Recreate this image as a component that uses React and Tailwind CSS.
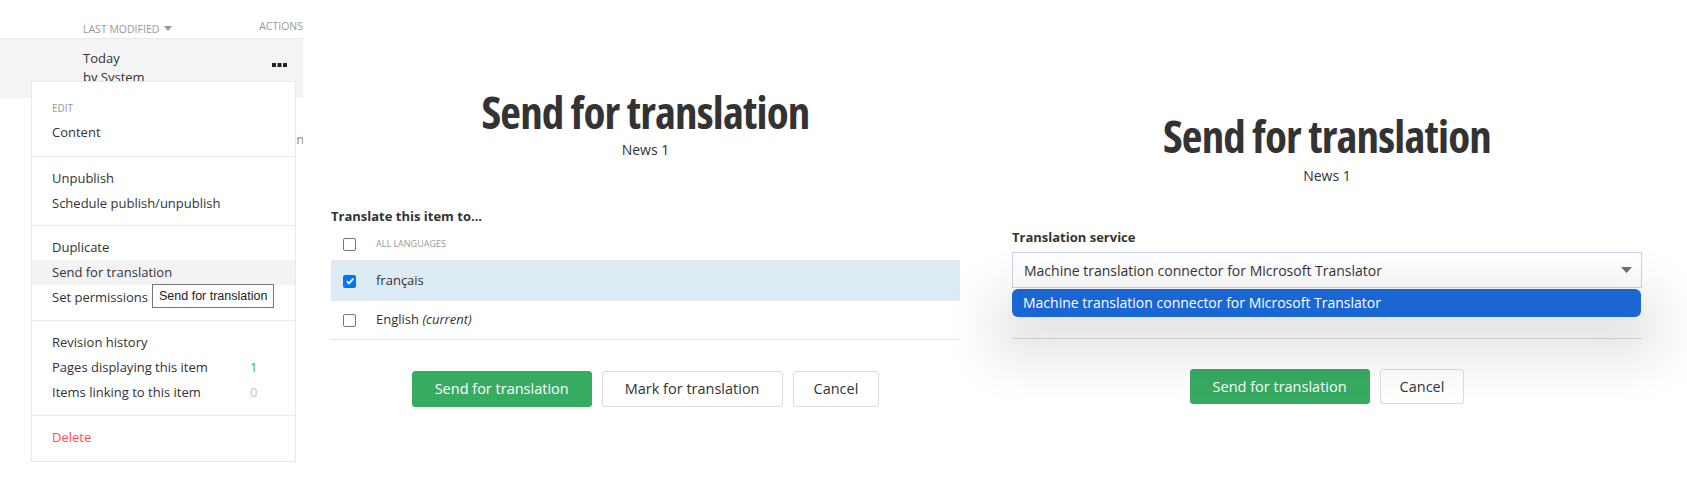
import React from 'react';

function Check({ checked }) {
  if (checked) {
    return (
      <span className="flex h-[13px] w-[13px] items-center justify-center rounded-[2px] bg-[#0075ff]">
        <svg width="10" height="10" viewBox="0 0 10 10">
          <path d="M1.8 5.2 L4 7.4 L8.4 2.6" fill="none" stroke="white" strokeWidth="1.8" />
        </svg>
      </span>
    );
  }
  return <span className="block h-[13px] w-[13px] rounded-[2px] border border-[#767676] bg-white"></span>;
}

function MenuItem({ children, className = '' }) {
  return <div className={`h-[25px] px-[20px] leading-[25px] ${className}`}>{children}</div>;
}

function ActionsMenu() {
  return (
    <div className="relative h-[488px] w-[303px] shrink-0 overflow-hidden">
      {/* grid header */}
      <div className="flex h-[38px] pt-[19px] text-[10.5px] uppercase leading-[14px] text-[#999]">
        <div className="flex w-[263px] items-center gap-[5px] pl-[83px]">
          Last modified
          <svg width="8" height="5" viewBox="0 0 8 5">
            <path d="M0 0 H8 L4 5 Z" fill="#999" />
          </svg>
        </div>
        <div>Actions</div>
      </div>

      <div className="flex h-[60px] border-t border-[#e9e9e9] bg-[#f4f4f4]">
        <div className="w-[272px] pl-[83px] pt-[10px] text-[13px] leading-[19px]">
          Today
          <br />
          by System
        </div>
        <div className="pt-[24px]">
          <svg width="15" height="4" viewBox="0 0 15 4">
            <rect x="0" y="0" width="4" height="4" fill="#222" />
            <rect x="5.5" y="0" width="4" height="4" fill="#222" />
            <rect x="11" y="0" width="4" height="4" fill="#222" />
          </svg>
        </div>
      </div>
      <div className="mt-[32px] pl-[293px] text-[13px] text-[#888]">in</div>

      {/* dropdown menu */}
      <div className="absolute left-[31px] top-[81px] w-[265px] border border-[#e8e8e8] bg-white text-[13px]">
        <div className="pb-[11px] pt-[19px]">
          <div className="mb-[5px] px-[20px] text-[10px] uppercase leading-[14px] text-[#999]">Edit</div>
          <MenuItem>Content</MenuItem>
        </div>
        <div className="border-t border-[#eaeaea] py-[9px]">
          <MenuItem>Unpublish</MenuItem>
          <MenuItem>Schedule publish/unpublish</MenuItem>
        </div>
        <div className="border-t border-[#eaeaea] pb-[10px] pt-[9px]">
          <MenuItem>Duplicate</MenuItem>
          <MenuItem className="bg-[#f3f3f3]">Send for translation</MenuItem>
          <MenuItem>Set permissions</MenuItem>
        </div>
        <div className="border-t border-[#eaeaea] pb-[10px] pt-[9px]">
          <MenuItem>Revision history</MenuItem>
          <MenuItem className="flex">
            <span className="w-[198px]">Pages displaying this item</span>
            <span className="text-[#3fae49]">1</span>
          </MenuItem>
          <MenuItem className="flex">
            <span className="w-[198px]">Items linking to this item</span>
            <span className="text-[#c4c4c4]">0</span>
          </MenuItem>
        </div>
        <div className="border-t border-[#eaeaea] pb-[11px] pt-[9px]">
          <MenuItem className="text-[#ff4d55]">Delete</MenuItem>
        </div>
      </div>

      {/* browser tooltip */}
      <div className="absolute left-[152px] top-[284px] h-[24px] border border-[#767676] bg-white px-[6px] font-['Liberation_Sans',sans-serif] text-[12.5px] leading-[22px] text-[#222]">
        Send for translation
      </div>
    </div>
  );
}

function Title({ children }) {
  return (
    <h1 className="text-center font-['Open_Sans',sans-serif] text-[45px] font-bold leading-[48px] tracking-[-0.8px] font-stretch-[75%] text-[#333]">
      {children}
    </h1>
  );
}

function TranslateDialog() {
  return (
    <div className="ml-[28px] flex w-[629px] shrink-0 flex-col">
      <div className="mt-[88px]">
        <Title>Send for translation</Title>
      </div>
      <p className="mt-[4px] text-center text-[14px] leading-[20px]">News 1</p>

      <p className="mt-[46px] text-[13px] font-bold leading-[20px]">Translate this item to...</p>
      <div className="mt-[2px]">
        <div className="flex h-[33px] items-center border-b border-[#e6e6e6] pl-[12px]">
          <Check />
          <span className="ml-[20px] text-[9px] uppercase text-[#999]">All languages</span>
        </div>
        <div className="flex h-[40px] items-center bg-[#dcebf4] pl-[12px]">
          <Check checked />
          <span className="ml-[20px] text-[13px]">français</span>
        </div>
        <div className="flex h-[39px] items-center border-b border-[#e6e6e6] pl-[12px]">
          <Check />
          <span className="ml-[20px] text-[13px]">
            English <em>(current)</em>
          </span>
        </div>
      </div>

      <div className="mt-[31px] flex justify-center gap-[10px]">
        <button className="h-[36px] rounded-[3px] border border-[#37ab62] bg-[#37ab62] px-[22px] text-[14.5px] text-white">
          Send for translation
        </button>
        <button className="h-[36px] rounded-[3px] border border-[#dcdcdc] bg-white px-[22px] text-[14.5px]">
          Mark for translation
        </button>
        <button className="h-[36px] rounded-[3px] border border-[#dcdcdc] bg-white px-[20px] text-[14.5px]">
          Cancel
        </button>
      </div>
    </div>
  );
}

function ServiceDialog() {
  return (
    <div className="ml-[52px] flex w-[630px] shrink-0 flex-col">
      <div className="mt-[112px]">
        <Title>Send for translation</Title>
      </div>
      <p className="mt-[6px] text-center text-[14px] leading-[20px]">News 1</p>

      <p className="mt-[41px] text-[13px] font-bold leading-[20px]">Translation service</p>
      <div className="relative mt-[5px]">
        <div className="flex h-[36px] items-center justify-between border border-[#c7d5e8] bg-white pl-[11px] pr-[9px] text-[14px]">
          <span>Machine translation connector for Microsoft Translator</span>
          <svg width="11" height="6" viewBox="0 0 11 6">
            <path d="M0 0 H11 L5.5 6 Z" fill="#6b6b6b" />
          </svg>
        </div>
        <div className="mr-px mt-[1px] h-[28px] rounded-[6px] bg-[#1a67d3] pl-[11px] text-[14px] leading-[28px] text-white shadow-[0_22px_50px_22px_rgba(0,0,0,0.1)]">
          Machine translation connector for Microsoft Translator
        </div>
      </div>
      <div className="mt-[21px] border-t border-[#dddddd]"></div>

      <div className="mt-[30px] flex justify-center gap-[10px]">
        <button className="h-[35px] rounded-[3px] border border-[#37ab62] bg-[#37ab62] px-[22px] text-[14.5px] text-white">
          Send for translation
        </button>
        <button className="h-[35px] rounded-[3px] border border-[#dcdcdc] bg-white px-[19px] text-[14.5px]">
          Cancel
        </button>
      </div>
    </div>
  );
}

export default function App() {
  return (
    <div className="flex h-[488px] w-[1687px] overflow-hidden bg-white font-['Open_Sans',sans-serif] text-[#333]">
      <ActionsMenu />
      <TranslateDialog />
      <ServiceDialog />
    </div>
  );
}
